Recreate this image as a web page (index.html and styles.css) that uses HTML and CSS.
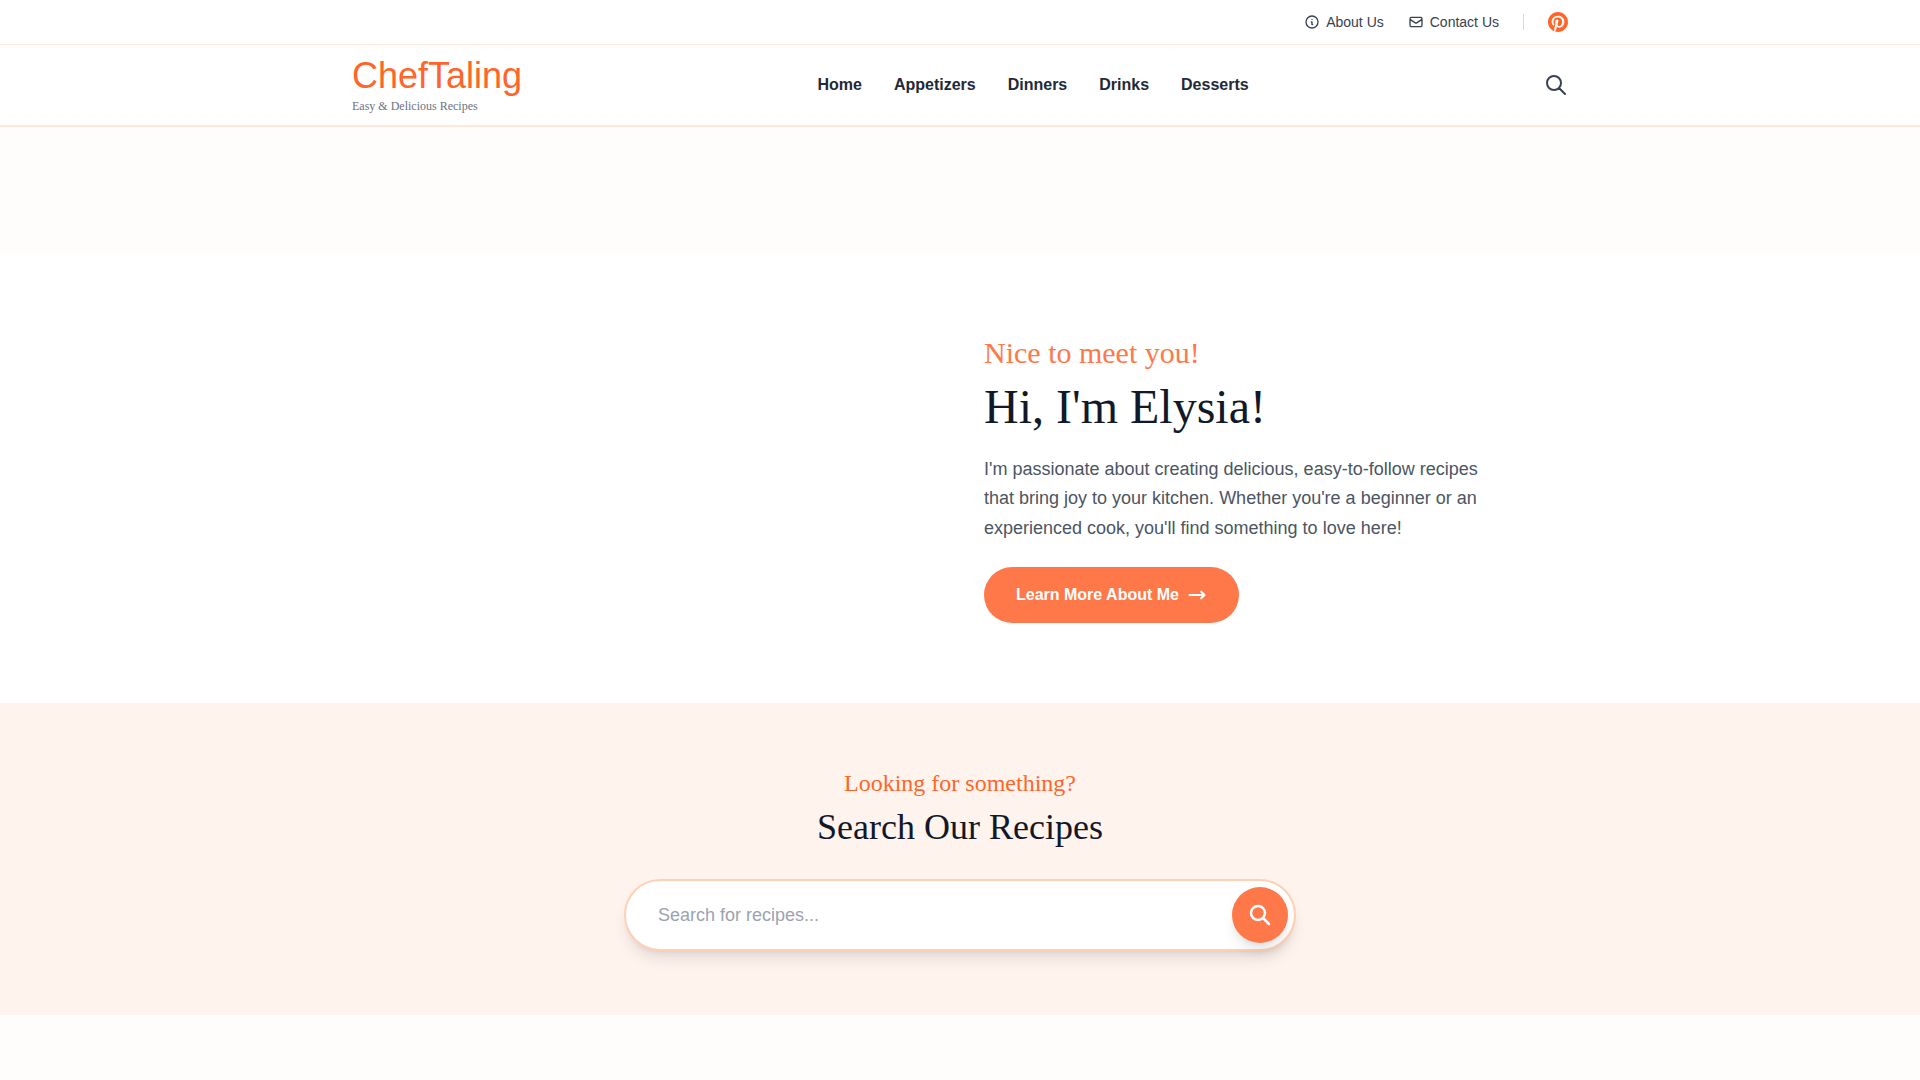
FILE: index.html
```html
<!DOCTYPE html>
<html lang="en">
<head>
    <meta charset="UTF-8">
    <meta name="viewport" content="width=device-width, initial-scale=1.0">
    <title>ChefTaling - Easy &amp; Delicious Recipes</title>
    <link rel="stylesheet" href="styles.css">
</head>
<body>
    <header class="site-header">
        <div class="top-bar">
            <div class="container top-bar-inner">
                <a href="#" class="top-link">
                    <svg class="icon-sm" viewBox="0 0 24 24"><path d="M13 16h-1v-4h-1m1-4h.01M21 12a9 9 0 11-18 0 9 9 0 0118 0z"/></svg>
                    About Us
                </a>
                <a href="#" class="top-link">
                    <svg class="icon-sm" viewBox="0 0 24 24"><path d="M3 8l7.89 5.26a2 2 0 002.22 0L21 8M5 19h14a2 2 0 002-2V7a2 2 0 00-2-2H5a2 2 0 00-2 2v10a2 2 0 002 2z"/></svg>
                    Contact Us
                </a>
                <span class="divider"></span>
                <a href="#" class="social" aria-label="Pinterest">
                    <svg viewBox="0 0 24 24"><path d="M12 0C5.373 0 0 5.372 0 12c0 5.084 3.163 9.426 7.627 11.174-.105-.949-.2-2.405.042-3.441.218-.937 1.407-5.965 1.407-5.965s-.359-.719-.359-1.782c0-1.668.967-2.914 2.171-2.914 1.023 0 1.518.769 1.518 1.69 0 1.029-.655 2.568-.994 3.995-.283 1.194.599 2.169 1.777 2.169 2.133 0 3.772-2.249 3.772-5.495 0-2.873-2.064-4.882-5.012-4.882-3.414 0-5.418 2.561-5.418 5.207 0 1.031.397 2.138.893 2.738a.36.36 0 01.083.345l-.333 1.36c-.053.22-.174.267-.402.161-1.499-.698-2.436-2.889-2.436-4.649 0-3.785 2.75-7.262 7.929-7.262 4.163 0 7.398 2.967 7.398 6.931 0 4.136-2.607 7.464-6.227 7.464-1.216 0-2.359-.631-2.75-1.378l-.748 2.853c-.271 1.043-1.002 2.35-1.492 3.146C9.57 23.812 10.763 24 12 24c6.627 0 12-5.373 12-12 0-6.628-5.373-12-12-12z"/></svg>
                </a>
            </div>
        </div>
        <div class="container main-bar">
            <a href="#" class="logo">
                <span class="logo-name">ChefTaling</span>
                <span class="logo-tagline">Easy &amp; Delicious Recipes</span>
            </a>
            <nav class="main-nav">
                <a href="#">Home</a>
                <a href="#">Appetizers</a>
                <a href="#">Dinners</a>
                <a href="#">Drinks</a>
                <a href="#">Desserts</a>
            </nav>
            <button type="button" class="search-toggle" aria-label="Search">
                <svg class="icon-lg" viewBox="0 0 24 24"><path d="M21 21l-6-6m2-5a7 7 0 11-14 0 7 7 0 0114 0z"/></svg>
            </button>
        </div>
    </header>

    <main>
        <section class="hero">
            <div class="container hero-grid">
                <div class="hero-photo"></div>
                <div class="hero-text">
                    <p class="hero-eyebrow">Nice to meet you!</p>
                    <h1>Hi, I'm Elysia!</h1>
                    <p class="hero-intro">I'm passionate about creating delicious, easy-to-follow recipes that bring joy to your kitchen. Whether you're a beginner or an experienced cook, you'll find something to love here!</p>
                    <a href="#" class="btn">
                        Learn More About Me
                        <svg class="icon-md icon-bold" viewBox="0 0 24 24"><path d="M17 8l4 4m0 0l-4 4m4-4H3"/></svg>
                    </a>
                </div>
            </div>
        </section>

        <section class="search-section">
            <p class="search-eyebrow">Looking for something?</p>
            <h2>Search Our Recipes</h2>
            <form class="search-form" onsubmit="return false">
                <input type="search" name="q" placeholder="Search for recipes..." aria-label="Search for recipes">
                <button type="submit" aria-label="Search">
                    <svg class="icon-lg icon-bold" viewBox="0 0 24 24"><path d="M21 21l-6-6m2-5a7 7 0 11-14 0 7 7 0 0114 0z"/></svg>
                </button>
            </form>
        </section>
    </main>
</body>
</html>
```
FILE: styles.css
```css
* {
    box-sizing: border-box;
    margin: 0;
    padding: 0;
}

body {
    font-family: "Liberation Sans", Arial, sans-serif;
    font-size: 16px;
    line-height: 24px;
    color: #1f2937;
    background-color: #fffdfb;
}

a {
    color: inherit;
    text-decoration: none;
}

button {
    border: none;
    cursor: pointer;
}

svg {
    display: block;
    fill: none;
    stroke: currentColor;
    stroke-width: 2;
    stroke-linecap: round;
    stroke-linejoin: round;
}

.icon-sm {
    width: 16px;
    height: 16px;
}

.icon-md {
    width: 20px;
    height: 20px;
}

.icon-lg {
    width: 24px;
    height: 24px;
}

.icon-bold {
    stroke-width: 2.5;
}

.container {
    max-width: 1280px;
    margin: 0 auto;
    padding: 0 32px;
}

/* Header */
.site-header {
    background-color: #ffffff;
    border-bottom: 2px solid #ffe8d9;
}

.top-bar {
    border-bottom: 1px solid #ffe8d9;
}

.top-bar-inner {
    display: flex;
    justify-content: flex-end;
    align-items: center;
    gap: 24px;
    padding-top: 12px;
    padding-bottom: 12px;
    font-size: 14px;
    line-height: 20px;
    color: #374151;
}

.top-link {
    display: flex;
    align-items: center;
    gap: 6px;
}

.divider {
    width: 1px;
    height: 16px;
    background-color: #ffd0b5;
}

.social {
    color: #ff6529;
}

.social svg {
    width: 20px;
    height: 20px;
    fill: currentColor;
    stroke: none;
}

.main-bar {
    display: flex;
    justify-content: space-between;
    align-items: center;
    height: 80px;
}

.logo {
    display: flex;
    flex-direction: column;
    gap: 2px;
}

.logo-name {
    font-size: 36px;
    line-height: 40px;
    color: #ff6529;
}

.logo-tagline {
    font-family: "Liberation Serif", "Times New Roman", serif;
    font-size: 12px;
    line-height: 16px;
    color: #6b7280;
}

.main-nav {
    display: flex;
    flex-wrap: wrap;
    gap: 32px;
    font-weight: bold;
}

.search-toggle {
    color: #374151;
    background: none;
}

/* Hero */
.hero {
    margin-top: 128px;
    padding: 80px 0;
    background-color: #ffffff;
}

.hero-grid {
    display: grid;
    grid-template-columns: 1fr 1fr;
    gap: 48px;
}

.hero-eyebrow,
.search-eyebrow,
h1,
h2 {
    font-family: "Liberation Serif", "Times New Roman", serif;
    font-weight: normal;
}

.hero-eyebrow {
    margin-bottom: 12px;
    font-size: 30px;
    line-height: 36px;
    color: #ff7849;
}

h1 {
    margin-bottom: 24px;
    font-size: 48px;
    line-height: 48px;
    color: #111827;
}

.hero-intro {
    max-width: 512px;
    margin-bottom: 24px;
    font-size: 18px;
    line-height: 1.625;
    color: #4b5563;
}

.btn {
    display: inline-flex;
    align-items: center;
    gap: 8px;
    padding: 16px 32px;
    border-radius: 28px;
    font-weight: bold;
    color: #ffffff;
    background-color: #ff7849;
}

.hero-text .btn {
    vertical-align: top;
}

/* Search */
.search-section {
    padding: 64px 32px;
    text-align: center;
    background-color: #fff3ee;
}

.search-eyebrow {
    margin-bottom: 8px;
    font-size: 24px;
    line-height: 32px;
    color: #ff6529;
}

h2 {
    margin-bottom: 32px;
    font-size: 36px;
    line-height: 40px;
    color: #111827;
}

.search-form {
    display: flex;
    align-items: center;
    max-width: 672px;
    margin: 0 auto;
    padding: 6px 6px 6px 32px;
    border: 2px solid #ffd0b5;
    border-radius: 36px;
    background-color: #ffffff;
    box-shadow: 0 10px 15px -3px rgba(0,0,0,0.1), 0 4px 6px -4px rgba(0,0,0,0.1);
}

.search-form input {
    flex: 1;
    min-width: 0;
    padding: 14px 0;
    border: none;
    outline: none;
    font-family: inherit;
    font-size: 18px;
    line-height: 28px;
    color: #1f2937;
    background: none;
}

.search-form input::placeholder {
    color: #9ca3af;
    line-height: 28px;
}

.search-form button {
    padding: 16px;
    border-radius: 50%;
    color: #ffffff;
    background-color: #ff7849;
    box-shadow: 0 10px 15px -3px rgba(0,0,0,0.1), 0 4px 6px -4px rgba(0,0,0,0.1);
}
```
